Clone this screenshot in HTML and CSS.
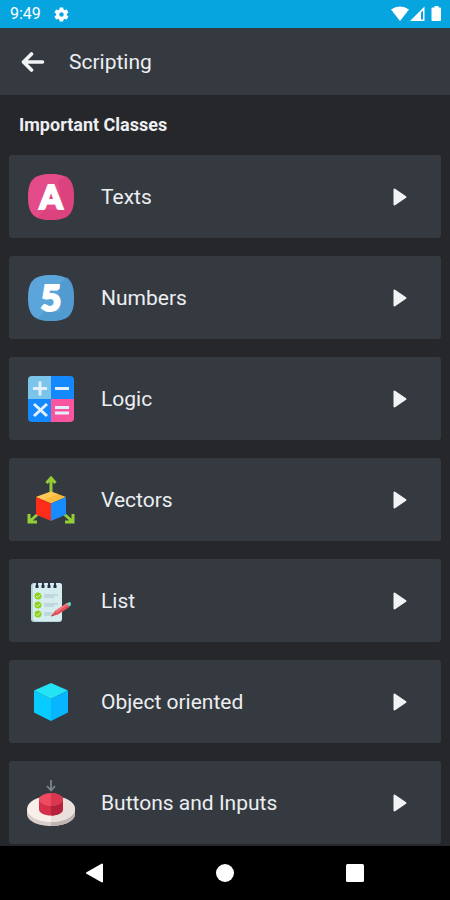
FILE: index.html
```
<!DOCTYPE html>
<html lang="en">
<head>
    <meta charset="UTF-8">
    <meta name="viewport" content="width=device-width, initial-scale=1.0">
    <title>Scripting</title>
    <link rel="stylesheet" href="styles.css">
</head>
<body>
    <div class="status-bar">
        <span class="time">9:49</span>
        <svg class="gear" viewBox="0 0 24 24" width="17" height="17">
            <path fill="#fff" fill-rule="evenodd" d="M19.4 13c0-.3.1-.6.1-1s0-.7-.1-1l2.1-1.6c.2-.2.3-.4.1-.7l-2-3.4c-.1-.2-.4-.3-.6-.2l-2.5 1c-.5-.4-1.1-.7-1.7-1L14.4 2.4c0-.2-.2-.4-.5-.4h-4c-.2 0-.4.2-.5.4L9 5.1c-.6.3-1.2.6-1.7 1l-2.5-1c-.2-.1-.5 0-.6.2l-2 3.4c-.1.2-.1.5.1.7L4.5 11c0 .3-.1.6-.1 1s0 .7.1 1l-2.2 1.6c-.2.2-.2.4-.1.7l2 3.4c.1.2.4.3.6.2l2.5-1c.5.4 1.1.7 1.7 1l.4 2.7c0 .2.2.4.5.4h4c.3 0 .5-.2.5-.4l.4-2.7c.6-.3 1.2-.6 1.7-1l2.5 1c.2.1.5 0 .6-.2l2-3.4c.1-.2.1-.5-.1-.7zM12 15.2a3.2 3.2 0 1 1 0-6.4 3.2 3.2 0 0 1 0 6.4z"/>
        </svg>
        <div class="status-icons">
            <svg viewBox="0 0 52 16" width="52" height="16">
                <path fill="#fff" d="M0 3.5Q9 -2.5 18 3.5L9 15z"/>
                <path fill="#fff" fill-rule="evenodd" d="M33.5 .5V15H19zM30 6.5V13.5H32V4.5z"/>
                <path fill="#fff" d="M43.5 0h4v1.500H49q1 0 1 1V14q0 1-1 1h-7.500q-1 0-1-1V2.500q0-1 1-1h2z"/>
            </svg>
        </div>
    </div>

    <header class="header">
        <button class="back" aria-label="Back">
            <svg viewBox="0 0 24 20" width="24" height="20">
                <path d="M21.5 10H3M10.500 2L2.500 10L10.500 18" fill="none" stroke="#f2f3f5" stroke-width="3.6" stroke-linecap="round" stroke-linejoin="round"/>
            </svg>
        </button>
        <h1 class="title">Scripting</h1>
    </header>

    <main class="content">
        <h2 class="section-title">Important Classes</h2>
        <nav class="list">
            <a class="card" href="#texts">
                <svg class="icon" viewBox="0 0 48 48">
                    <path fill="#e34c88" d="M24 1C41 1 47 7 47 24S41 47 24 47 1 41 1 24 7 1 24 1z"/>
                    <path fill="#d63c78" d="M31 8l8-5c6 4 8 10 8 21 0 17-6 23-23 23-6 0-11-1-14-2l7-8h20z" opacity=".6"/>
                    <text class="glyph" x="24" y="36">A</text>
                </svg>
                <span class="label">Texts</span>
                <svg class="play" viewBox="0 0 16 20"><path d="M2.5 2.5L13.5 10L2.5 17.5z"/></svg>
            </a>
            <a class="card" href="#numbers">
                <svg class="icon" viewBox="0 0 48 48">
                    <path fill="#5ba5da" d="M24 1C41 1 47 7 47 24S41 47 24 47 1 41 1 24 7 1 24 1z"/>
                    <path fill="#4b94cb" d="M32 10l8-7c5 4 7 10 7 21 0 17-6 23-23 23-6 0-11-1-14-2l7-7h16z" opacity=".6"/>
                    <text class="glyph five" x="24" y="37">5</text>
                </svg>
                <span class="label">Numbers</span>
                <svg class="play" viewBox="0 0 16 20"><path d="M2.5 2.5L13.5 10L2.5 17.5z"/></svg>
            </a>
            <a class="card" href="#logic">
                <svg class="icon" viewBox="0 0 48 48">
                    <path fill="#7bc5ea" d="M24 24H1V5q0-4 4-4h19z"/>
                    <path fill="#1388ff" d="M24 24V1h19q4 0 4 4v19z"/>
                    <path fill="#1388ff" d="M24 24v23H5q-4 0-4-4V24z"/>
                    <path fill="#fa559f" d="M24 24h23v19q0 4-4 4H24z"/>
                    <path d="M13 6.5v14M6 13.5h14M28 13.5h14M7 29l13 12M20 29l-13 12M28 32.5h14M28 38h14" fill="none" stroke="#e3effa" stroke-width="3"/>
                </svg>
                <span class="label">Logic</span>
                <svg class="play" viewBox="0 0 16 20"><path d="M2.5 2.5L13.5 10L2.5 17.5z"/></svg>
            </a>
            <a class="card" href="#vectors">
                <svg class="icon" viewBox="0 0 48 48">
                    <path d="M24 20V3M19.5 7L24 2l4.5 5M12 37L2.5 45.5M2 38v8h8M36 37l9.5 8.5M46 38v8h-8" fill="none" stroke="#94cd38" stroke-width="3"/>
                    <path fill="#f8bb3c" d="M24 15.5L39 21 24 27.5 9 21z"/>
                    <path fill="#ffd164" d="M24 15.5L9 21l7 3L31 18z" opacity=".65"/>
                    <path fill="#fd2d19" d="M9 21l15 6.5V45L9 38.5z"/>
                    <path fill="#168cff" d="M39 21l-15 6.5V45l15-6.5z"/>
                </svg>
                <span class="label">Vectors</span>
                <svg class="play" viewBox="0 0 16 20"><path d="M2.5 2.5L13.5 10L2.5 17.5z"/></svg>
            </a>
            <a class="card" href="#list">
                <svg class="icon" viewBox="0 0 48 48">
                    <rect x="4" y="6" width="31" height="39" rx="3" fill="#b6d4da"/>
                    <rect x="6" y="6" width="29" height="38" rx="3" fill="#d6edf0"/>
                    <path d="M10 10V4M16 10V4M22 10V4M28 10V4" stroke="#2c3545" stroke-width="2"/>
                    <path d="M10 8v3M16 8v3M22 8v3M28 8v3" stroke="#233044" stroke-width="3"/>
                    <g fill="#8ed31f">
                        <circle cx="11" cy="19" r="3.5"/>
                        <circle cx="11" cy="28" r="3.5"/>
                        <circle cx="11" cy="37" r="3.5"/>
                    </g>
                    <path d="M9 19l1.5 1.5 3-3M9 28l1.5 1.5 3-3M9 37l1.5 1.5 3-3" fill="none" stroke="#d7f39b" stroke-width="1"/>
                    <path d="M17 18h14M17 20h10M17 27h14M17 29h10M17 36h9M17 38h7" stroke="#a9c1cc" stroke-width="1"/>
                    <path fill="#e84e59" d="M24 39.5l4-5.5L40 26l2.5 4L31 37.5z"/>
                    <path fill="#f3777b" d="M28 34L40 26l1 1.5L29.5 35.5z"/>
                    <path fill="#75d3c5" d="M39.5 26.5l3-1.5q1.5 0 1.5 2t-2 2.5z"/>
                    <path fill="#a64351" d="M24 39.5l1.5-2.5 1.3 1.5z"/>
                </svg>
                <span class="label">List</span>
                <svg class="play" viewBox="0 0 16 20"><path d="M2.5 2.5L13.5 10L2.5 17.5z"/></svg>
            </a>
            <a class="card" href="#object-oriented">
                <svg class="icon" viewBox="0 0 48 48">
                    <path fill="#24e3f5" d="M24 5l17 7.5L24 21 7 12.5z"/>
                    <path fill="#08cbff" d="M7 12.5L24 21v22L7 34.5z"/>
                    <path fill="#08b6ff" d="M41 12.5L24 21v22l17-8.5z"/>
                </svg>
                <span class="label">Object oriented</span>
                <svg class="play" viewBox="0 0 16 20"><path d="M2.5 2.5L13.5 10L2.5 17.5z"/></svg>
            </a>
            <a class="card" href="#buttons-and-inputs">
                <svg class="icon" viewBox="0 0 48 48">
                    <path fill="#d8cecb" d="M0 30v5c0 7 11 12 24 12s24-5 24-12v-5z"/>
                    <path fill="#bfb5b3" d="M24 30h24v5c0 7-11 12-24 12z"/>
                    <ellipse cx="24" cy="30" rx="24" ry="13" fill="#f8efea"/>
                    <path fill="#e9dfdb" d="M24 17c13 0 24 6 24 13s-11 13-24 13z"/>
                    <path fill="#d52f4a" d="M12 20v10c0 4 5 6.5 12 6.5S36 34 36 30V20z"/>
                    <path fill="#b5213b" d="M24 20h12v10c0 4-5 6.5-12 6.5z"/>
                    <ellipse cx="24" cy="20.5" rx="12" ry="6.5" fill="#ee4b61"/>
                    <path fill="#db3650" d="M24 14c7 0 12 3 12 6.5S31 27 24 27z"/>
                    <path d="M24 1v10M20 7l4 4.5L28 7" fill="none" stroke="#7e858c" stroke-width="1.8"/>
                </svg>
                <span class="label">Buttons and Inputs</span>
                <svg class="play" viewBox="0 0 16 20"><path d="M2.5 2.5L13.5 10L2.5 17.5z"/></svg>
            </a>
        </nav>
    </main>

    <footer class="nav-bar">
        <button aria-label="Back">
            <svg viewBox="0 0 20 20" width="20" height="20"><path d="M16 1.5V18.5L1 10z" fill="#fff" stroke="#fff" stroke-width="2" stroke-linejoin="round"/></svg>
        </button>
        <button aria-label="Home">
            <svg viewBox="0 0 20 20" width="20" height="20"><circle cx="10" cy="10" r="9" fill="#fff"/></svg>
        </button>
        <button aria-label="Recents">
            <svg viewBox="0 0 20 20" width="20" height="20"><rect x="1" y="1" width="18" height="18" rx="1.5" fill="#fff"/></svg>
        </button>
    </footer>
</body>
</html>
```
FILE: styles.css
```
* {
    box-sizing: border-box;
}
body {
    display: flex;
    flex-direction: column;
    height: 100vh;
    margin: 0;
    background-color: #26272b;
    color: #eceef1;
    font-family: Roboto, sans-serif;
}
button {
    display: flex;
    align-items: center;
    justify-content: center;
    padding: 0;
    border: none;
    background: none;
    cursor: pointer;
}
.status-bar {
    display: flex;
    align-items: center;
    flex-shrink: 0;
    height: 28px;
    padding: 0 7px 0 10px;
    background-color: #06a5e0;
    color: white;
}
.time {
    font-size: 16px;
    line-height: 28px;
}
.gear {
    margin-left: 12px;
}
.status-icons {
    display: flex;
    margin-left: auto;
}
.header {
    display: flex;
    align-items: center;
    flex-shrink: 0;
    gap: 24px;
    height: 67px;
    padding: 0 21px;
    background-color: #353a41;
}
.title {
    margin: 0;
    font-size: 21px;
    font-weight: 400;
    line-height: 28px;
}
.content {
    flex: 1;
    min-height: 0;
    padding: 0 9px;
    overflow-y: auto;
    scrollbar-width: none;
}
.section-title {
    margin: 0;
    padding: 18px 10px;
    font-size: 18px;
    font-weight: 700;
    line-height: 24px;
}
.list {
    display: flex;
    flex-direction: column;
    gap: 18px;
}
.card {
    display: flex;
    align-items: center;
    height: 83px;
    padding: 0 33px 0 18px;
    border-radius: 3px;
    background-color: #353a41;
    color: inherit;
    text-decoration: none;
}
.icon {
    width: 48px;
    height: 48px;
}
.glyph {
    fill: white;
    stroke: white;
    stroke-width: 2;
    font-family: Lato, sans-serif;
    font-size: 33px;
    font-weight: 900;
    text-anchor: middle;
}
.five {
    font-size: 36px;
}
.label {
    flex: 1;
    margin-left: 26px;
    font-size: 21px;
    line-height: 28px;
}
.play {
    width: 16px;
    height: 20px;
    fill: #f2f3f5;
    stroke: #f2f3f5;
    stroke-width: 2;
    stroke-linejoin: round;
}
.nav-bar {
    display: flex;
    align-items: center;
    justify-content: space-between;
    flex-shrink: 0;
    height: 54px;
    padding: 0 19%;
    background-color: black;
}
```
